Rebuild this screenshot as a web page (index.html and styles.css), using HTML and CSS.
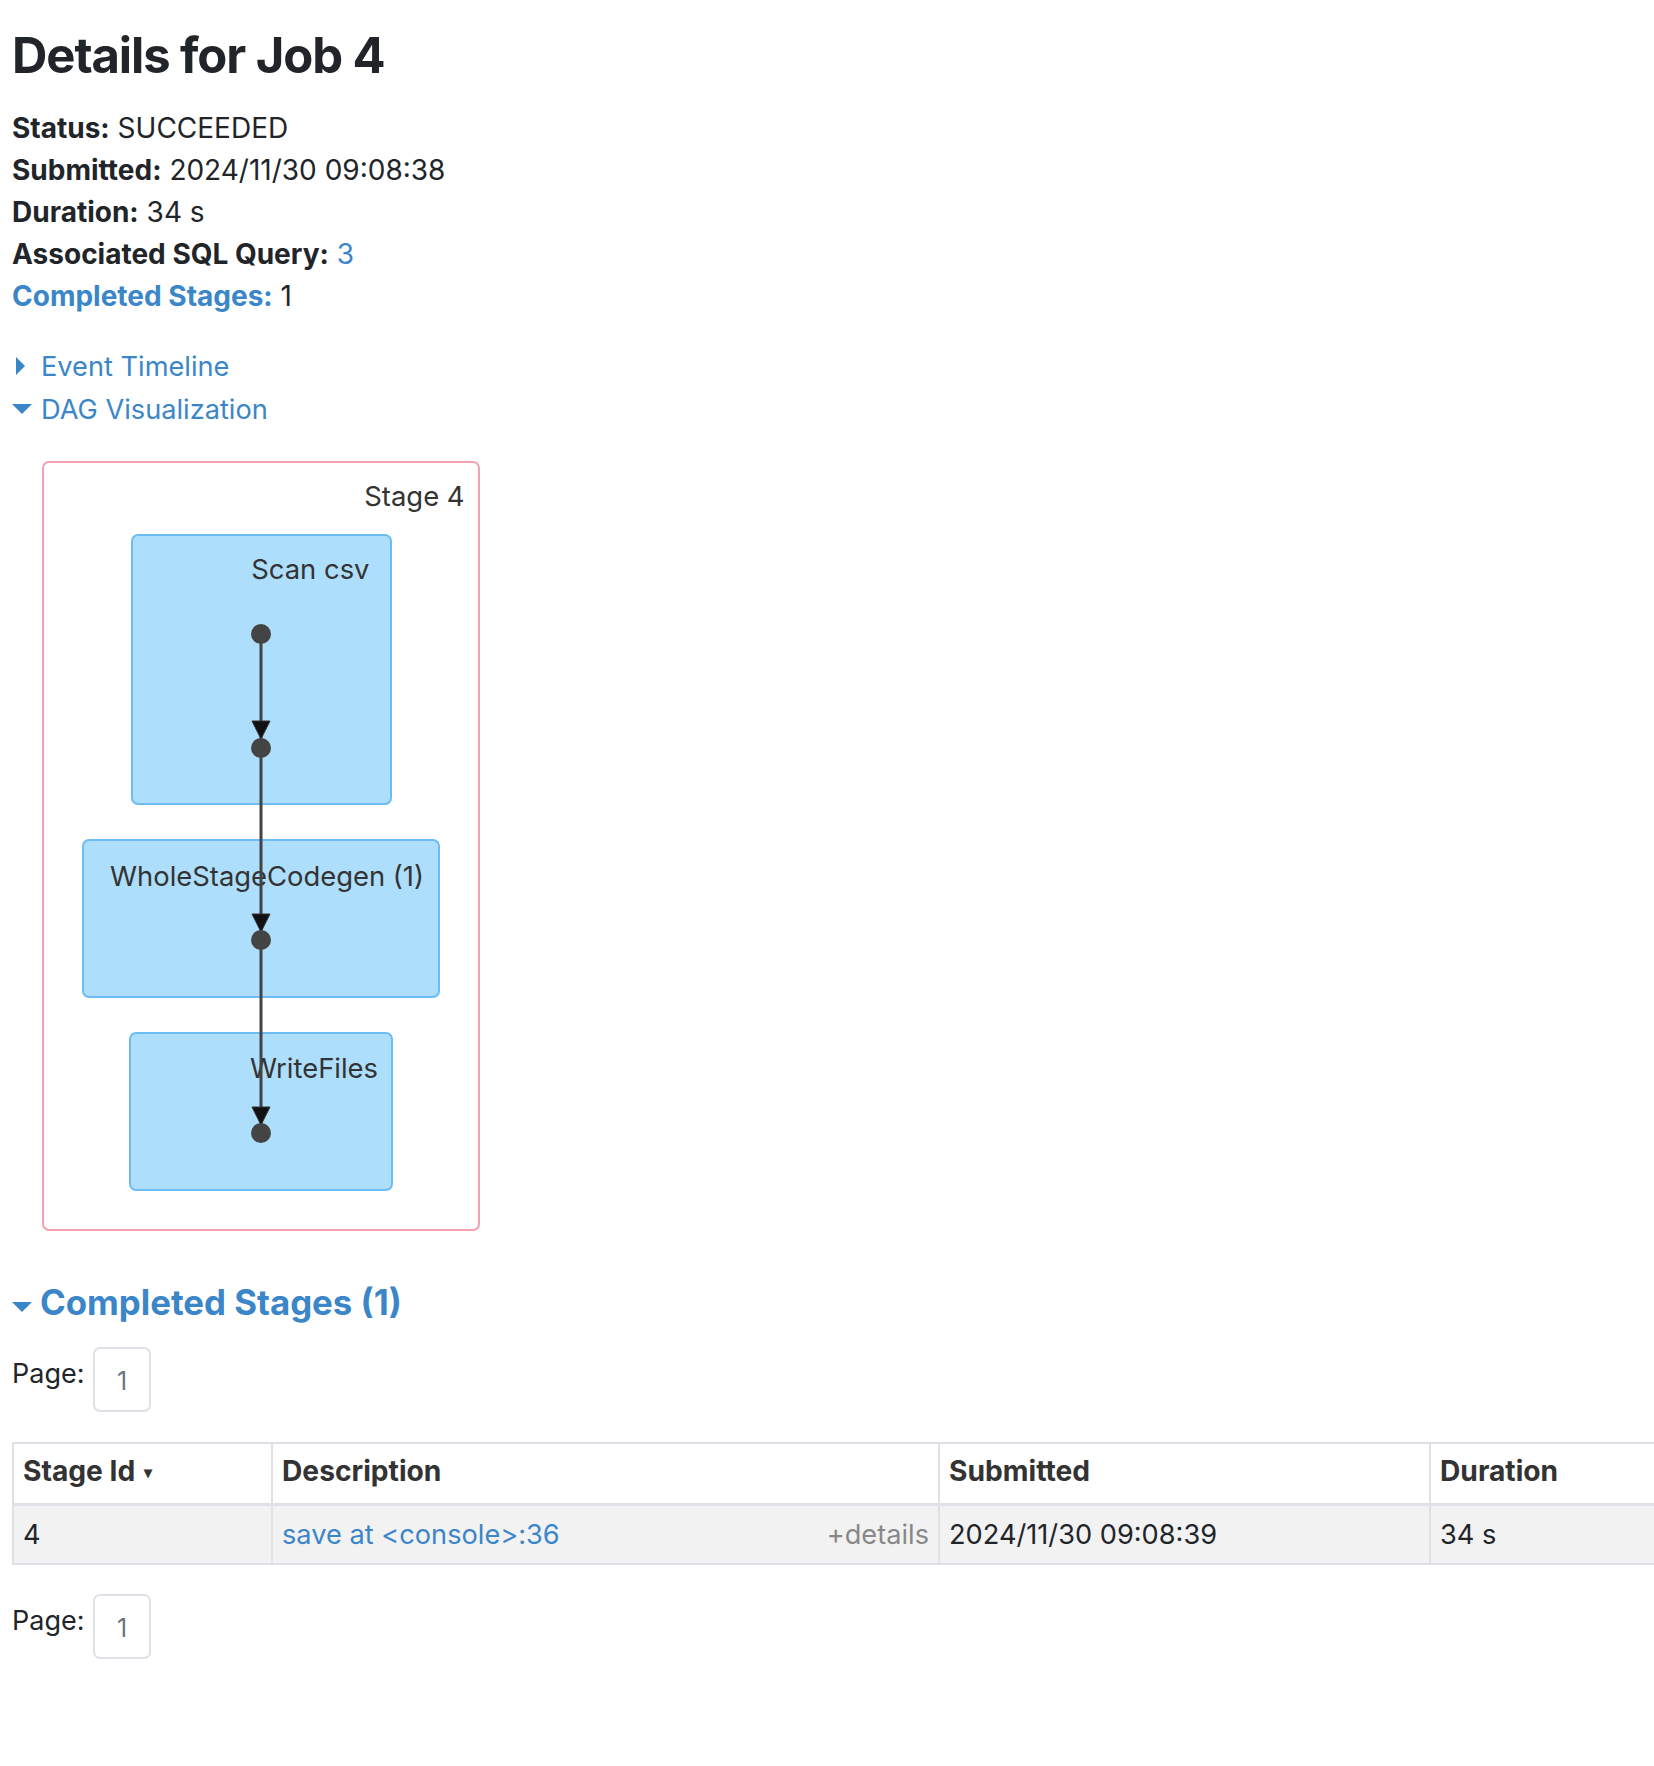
FILE: index.html
```html
<!DOCTYPE html>
<html lang="en">
<head>
<meta charset="utf-8">
<title>Details for Job 4</title>
<link rel="stylesheet" href="styles.css">
</head>
<body>
<div class="page">
  <h3 class="title">Details for Job 4</h3>
  <ul class="summary">
    <li><strong>Status:</strong> SUCCEEDED</li>
    <li><strong>Submitted:</strong> 2024/11/30 09:08:38</li>
    <li><strong>Duration:</strong> 34 s</li>
    <li><strong>Associated SQL Query:</strong> <a class="link" href="#">3</a></li>
    <li><a class="link strong-link" href="#">Completed Stages:</a> 1</li>
  </ul>
  <div class="toggles">
    <div class="toggle"><span class="arrow-slot"><span class="arrow-closed"></span></span><a class="link" href="#">Event Timeline</a></div>
    <div class="toggle"><span class="arrow-slot"><span class="arrow-open"></span></span><a class="link" href="#">DAG Visualization</a></div>
  </div>
  <svg class="dag" width="460" height="790" viewBox="0 0 460 790" xmlns="http://www.w3.org/2000/svg">
    <rect class="stage-rect" x="13" y="11" width="436" height="768" rx="6" ry="6"/>
    <text class="dag-label" x="434.5" y="55" text-anchor="end">Stage 4</text>
    <rect class="node-rect" x="102" y="84" width="259" height="269" rx="6" ry="6"/>
    <text class="dag-label" x="339.5" y="128" text-anchor="end">Scan csv</text>
    <rect class="node-rect" x="53" y="389" width="356" height="157" rx="6" ry="6"/>
    <text class="dag-label" x="394" y="435" text-anchor="end">WholeStageCodegen (1)</text>
    <rect class="node-rect" x="100" y="582" width="262" height="157" rx="6" ry="6"/>
    <text class="dag-label" x="348" y="627" text-anchor="end">WriteFiles</text>
    <line class="edge" x1="231" y1="183" x2="231" y2="673"/>
    <polygon class="arrowhead" points="222,270 240,270 231,288"/>
    <polygon class="arrowhead" points="222,463 240,463 231,481"/>
    <polygon class="arrowhead" points="222,656 240,656 231,674"/>
    <circle class="dot" cx="231" cy="183" r="10"/>
    <circle class="dot" cx="231" cy="297" r="10"/>
    <circle class="dot" cx="231" cy="489" r="10"/>
    <circle class="dot" cx="231" cy="682" r="10"/>
  </svg>
  <h4 class="section"><span class="arrow-slot"><span class="arrow-open"></span></span><span>Completed Stages (1)</span></h4>
  <div class="pager pager-top">
    <span class="pager-label">Page:</span>
    <span class="pager-box">1</span>
  </div>
  <div class="table-wrap">
    <table class="stages">
      <colgroup>
        <col class="c-id"><col class="c-desc"><col class="c-sub"><col class="c-dur">
      </colgroup>
      <thead>
        <tr>
          <th>Stage Id <span class="sort">▾</span></th>
          <th>Description</th>
          <th>Submitted</th>
          <th>Duration</th>
        </tr>
      </thead>
      <tbody>
        <tr>
          <td>4</td>
          <td><div class="desc"><a class="link" href="#">save at &lt;console&gt;:36</a><span class="details">+details</span></div></td>
          <td>2024/11/30 09:08:39</td>
          <td>34 s</td>
        </tr>
      </tbody>
    </table>
  </div>
  <div class="pager pager-bottom">
    <span class="pager-label">Page:</span>
    <span class="pager-box">1</span>
  </div>
</div>
</body>
</html>
```
FILE: styles.css
```css
html, body {
  margin: 0;
  padding: 0;
  background: #ffffff;
}
body {
  font-family: Inter, "Noto Sans", "Liberation Sans", sans-serif;
  color: #212529;
  overflow-x: hidden;
}
.page {
  padding: 0 12px;
}
.title {
  font-size: 49px;
  line-height: 1.2;
  font-weight: 700;
  letter-spacing: -1.1px;
  margin: 27px 0 21px;
  color: #212529;
}
.summary {
  list-style: none;
  margin: 0;
  padding: 0;
  font-size: 28px;
  line-height: 42px;
}
.summary strong {
  font-weight: 700;
}
.link {
  color: #3b86c8;
  text-decoration: none;
}
.strong-link {
  font-weight: 700;
}
.toggles {
  margin-top: 28px;
  font-size: 27.2px;
  line-height: 43px;
}
.toggle {
  display: flex;
  align-items: center;
}
.arrow-slot {
  width: 29px;
  flex: none;
  display: flex;
  align-items: center;
}
.arrow-closed {
  width: 0;
  height: 0;
  margin-left: 4px;
  border-top: 9px solid transparent;
  border-bottom: 9px solid transparent;
  border-left: 9px solid #3b86c8;
}
.arrow-open {
  width: 0;
  height: 0;
  border-left: 10px solid transparent;
  border-right: 10px solid transparent;
  border-top: 10px solid #3b86c8;
}
.dag {
  display: block;
  margin: 20px 0 0 18px;
}
.stage-rect {
  fill: #ffffff;
  stroke: #f4a2b2;
  stroke-width: 2;
}
.node-rect {
  fill: #addefc;
  stroke: #6cbdf5;
  stroke-width: 2;
}
.dag-label {
  font-family: Inter, "Noto Sans", "Liberation Sans", sans-serif;
  font-size: 27.4px;
  fill: #333333;
}
.edge {
  stroke: #444444;
  stroke-width: 3;
}
.arrowhead {
  fill: #111111;
  stroke: #333333;
  stroke-width: 1;
}
.dot {
  fill: #444444;
}
.section {
  display: flex;
  align-items: center;
  margin: 41px 0 0;
  font-size: 34.8px;
  line-height: 40.8px;
  font-weight: 700;
  color: #3b86c8;
}
.section .arrow-open {
  margin-top: 10px;
}
.section .arrow-slot {
  width: 28px;
}
.pager {
  display: flex;
  align-items: flex-start;
  font-size: 27px;
  line-height: 36.75px;
}
.pager-top {
  margin-top: 24px;
}
.pager-bottom {
  margin-top: 29px;
}
.pager-label {
  margin-top: 9px;
  width: 81px;
}
.pager-box {
  box-sizing: border-box;
  width: 58px;
  height: 65px;
  border: 2px solid #dee2e6;
  border-radius: 7px;
  color: #6c757d;
  font-size: 25px;
  text-align: center;
  padding-top: 14px;
}
.table-wrap {
  margin: 30px -12px 0 0;
  overflow: hidden;
}
.stages {
  table-layout: fixed;
  width: 1817px;
  border-collapse: collapse;
  font-size: 27.2px;
  line-height: 36.75px;
}
.c-id { width: 259px; }
.c-desc { width: 667px; }
.c-sub { width: 491px; }
.c-dur { width: 400px; }
.stages th,
.stages td {
  border: 2px solid #dee2e6;
  text-align: left;
  vertical-align: top;
  padding: 9px 9px 13px;
  white-space: nowrap;
}
.stages th {
  font-weight: 700;
  font-size: 28.2px;
  color: #333333;
  border-bottom-width: 3px;
}
.stages td {
  background: #f2f2f2;
  padding: 11px 9px 9px;
}
.sort {
  font-size: 16px;
  vertical-align: 3px;
  margin-left: 2px;
}
.desc {
  display: flex;
  justify-content: space-between;
}
.details {
  color: #888888;
}
```
